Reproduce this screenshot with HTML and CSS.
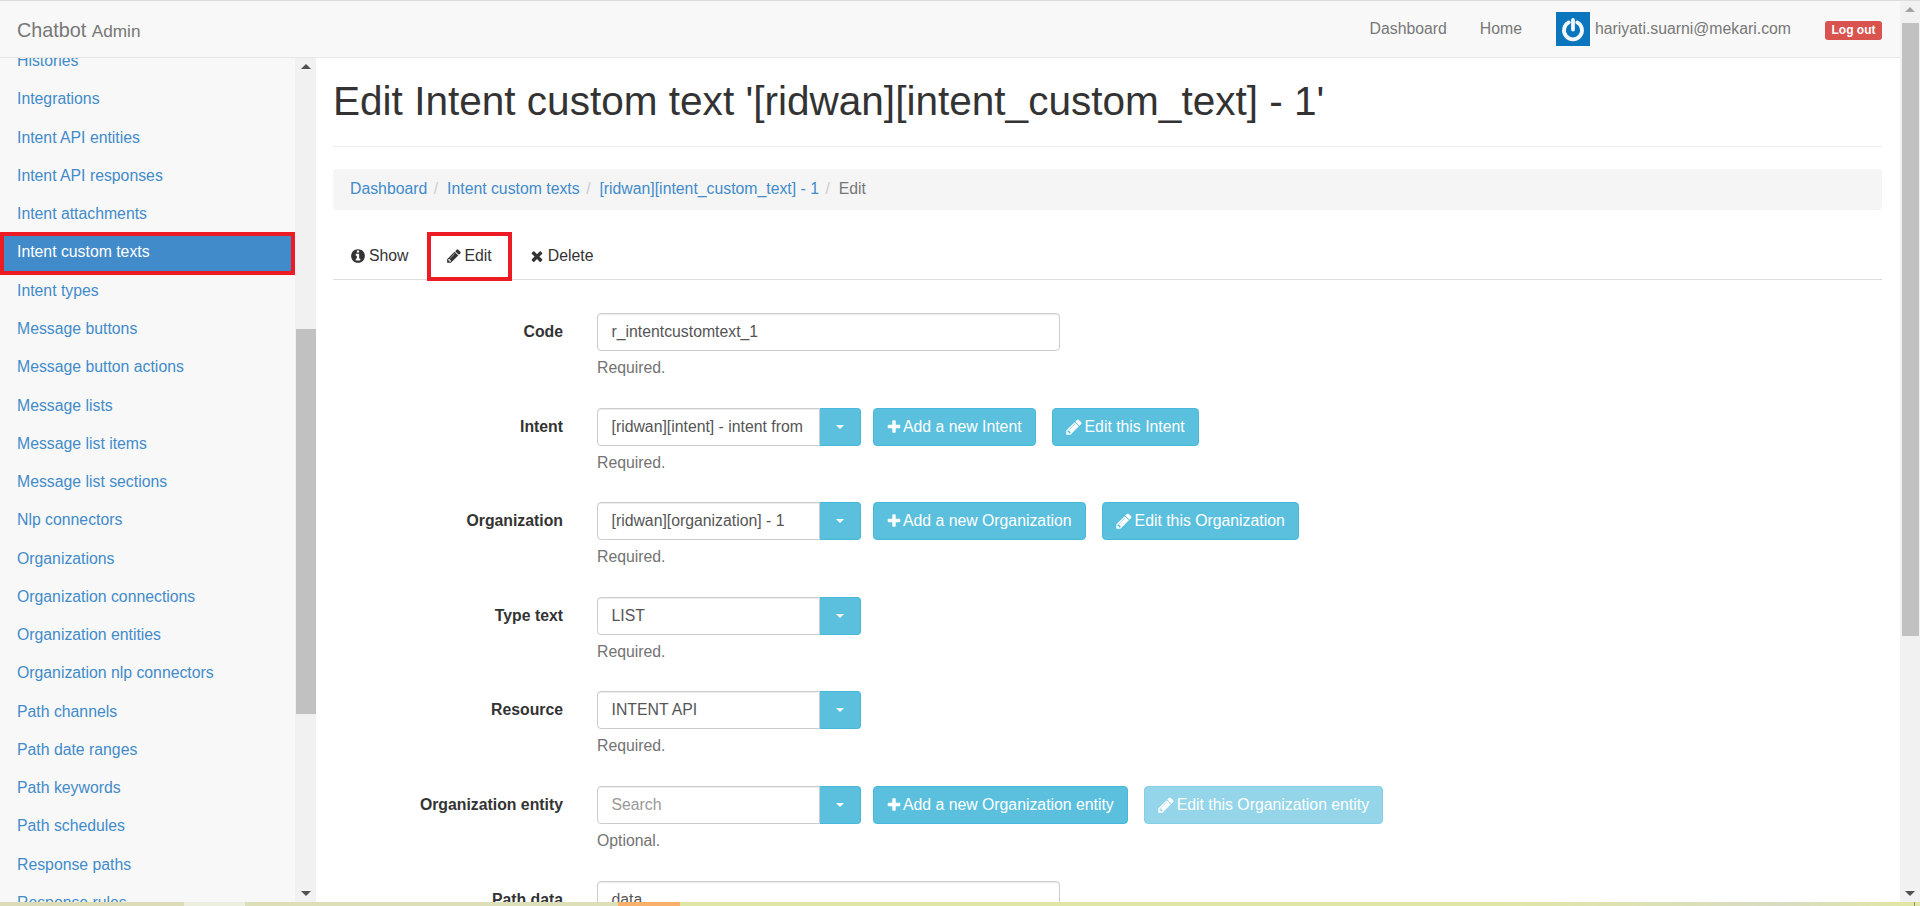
FILE: index.html
```html
<!DOCTYPE html>
<html lang="en">
<head>
<meta charset="utf-8">
<title>Edit Intent custom text</title>
<link rel="stylesheet" href="styles.css">
</head>
<body>
<svg class="defs" width="0" height="0" aria-hidden="true">
  <symbol id="i-info" viewBox="0 0 1536 1792"><path transform="translate(-128 0)" d="M1152 1376v-160q0-14-9-23t-23-9h-96v-512q0-14-9-23t-23-9h-320q-14 0-23 9t-9 23v160q0 14 9 23t23 9h96v320h-96q-14 0-23 9t-9 23v160q0 14 9 23t23 9h448q14 0 23-9t9-23zm-128-896v-160q0-14-9-23t-23-9h-192q-14 0-23 9t-9 23v160q0 14 9 23t23 9h192q14 0 23-9t9-23zm640 416q0 209-103 385.5t-279.5 279.5-385.5 103-385.5-103-279.5-279.5-103-385.5 103-385.5 279.5-279.5 385.5-103 385.5 103 279.5 279.5 103 385.5z"/></symbol>
  <symbol id="i-pencil" viewBox="0 0 1536 1792"><path transform="translate(-128 0)" d="M491 1536l91-91-235-235-91 91v107h128v128h107zm523-928q0-22-22-22-10 0-17 7l-542 542q-7 7-7 17 0 22 22 22 10 0 17-7l542-542q7-7 7-17zm-54-192l416 416-832 832h-416v-416zm683 96q0 53-37 90l-166 166-416-416 166-165q36-38 90-38 53 0 91 38l235 234q37 39 37 91z"/></symbol>
  <symbol id="i-times" viewBox="0 0 1408 1792"><path transform="translate(-192 0)" d="M1490 1322q0 40-28 68l-136 136q-28 28-68 28t-68-28l-294-294-294 294q-28 28-68 28t-68-28l-136-136q-28-28-28-68t28-68l294-294-294-294q-28-28-28-68t28-68l136-136q28-28 68-28t68 28l294 294 294-294q28-28 68-28t68 28l136 136q28 28 28 68t-28 68l-294 294 294 294q28 28 28 68z"/></symbol>
  <symbol id="i-plus" viewBox="0 0 1408 1792"><path transform="translate(-192 0)" d="M1600 736v192q0 40-28 68t-68 28h-416v416q0 40-28 68t-68 28h-192q-40 0-68-28t-28-68v-416h-416q-40 0-68-28t-28-68v-192q0-40 28-68t68-28h416v-416q0-40 28-68t68-28h192q40 0 68 28t28 68v416h416q40 0 68 28t28 68z"/></symbol>
</svg>

<div class="frame">
  <div class="page">
    <header class="navbar">
      <a class="brand" href="#">Chatbot <small>Admin</small></a>
      <nav class="topnav">
        <a href="#">Dashboard</a>
        <a href="#">Home</a>
        <span class="user">
          <svg class="avatar" viewBox="0 0 34 34" aria-hidden="true">
            <rect width="34" height="34" fill="#0b76bd"/>
            <path d="M12.8 10.4A9 9 0 1 0 21.2 10.4" fill="none" stroke="#f2f8fc" stroke-width="3.8" stroke-linecap="round"/>
            <path d="M17 8V17.5" fill="none" stroke="#f2f8fc" stroke-width="3.8" stroke-linecap="round"/>
          </svg>
          hariyati.suarni@mekari.com
        </span>
        <a class="logout" href="#">Log out</a>
      </nav>
    </header>

    <div class="layout">
      <aside class="sidebar">
        <ul class="menu">
          <li><a href="#">Histories</a></li>
          <li><a href="#">Integrations</a></li>
          <li><a href="#">Intent API entities</a></li>
          <li><a href="#">Intent API responses</a></li>
          <li><a href="#">Intent attachments</a></li>
          <li class="active"><a href="#">Intent custom texts</a></li>
          <li><a href="#">Intent types</a></li>
          <li><a href="#">Message buttons</a></li>
          <li><a href="#">Message button actions</a></li>
          <li><a href="#">Message lists</a></li>
          <li><a href="#">Message list items</a></li>
          <li><a href="#">Message list sections</a></li>
          <li><a href="#">Nlp connectors</a></li>
          <li><a href="#">Organizations</a></li>
          <li><a href="#">Organization connections</a></li>
          <li><a href="#">Organization entities</a></li>
          <li><a href="#">Organization nlp connectors</a></li>
          <li><a href="#">Path channels</a></li>
          <li><a href="#">Path date ranges</a></li>
          <li><a href="#">Path keywords</a></li>
          <li><a href="#">Path schedules</a></li>
          <li><a href="#">Response paths</a></li>
          <li><a href="#">Response rules</a></li>
        </ul>
        <div class="scrollbar side-bar">
          <span class="arrow up"></span>
          <span class="track"><span class="thumb"></span></span>
          <span class="arrow down"></span>
        </div>
      </aside>

      <main class="content">
        <h1 class="title">Edit Intent custom text '[ridwan][intent_custom_text] - 1'</h1>
        <ol class="crumbs">
          <li><a href="#">Dashboard</a></li>
          <li><a href="#">Intent custom texts</a></li>
          <li><a href="#">[ridwan][intent_custom_text] - 1</a></li>
          <li class="current">Edit</li>
        </ol>
        <ul class="tabs">
          <li><a href="#"><svg class="ico"><use href="#i-info"/></svg>Show</a></li>
          <li class="marked"><a href="#"><svg class="ico"><use href="#i-pencil"/></svg>Edit</a></li>
          <li><a href="#"><svg class="ico"><use href="#i-times"/></svg>Delete</a></li>
        </ul>

        <form class="form">
          <div class="row">
            <label class="label">Code</label>
            <div class="field">
              <div class="input wide">r_intentcustomtext_1</div>
              <p class="help">Required.</p>
            </div>
          </div>
          <div class="row">
            <label class="label">Intent</label>
            <div class="field">
              <div class="controls">
                <div class="combo"><div class="input">[ridwan][intent] - intent from</div><span class="caret-btn"><i class="caret"></i></span></div>
                <a class="btn" href="#"><svg class="ico"><use href="#i-plus"/></svg>Add a new Intent</a>
                <a class="btn" href="#"><svg class="ico pen"><use href="#i-pencil"/></svg>Edit this Intent</a>
              </div>
              <p class="help">Required.</p>
            </div>
          </div>
          <div class="row">
            <label class="label">Organization</label>
            <div class="field">
              <div class="controls">
                <div class="combo"><div class="input">[ridwan][organization] - 1</div><span class="caret-btn"><i class="caret"></i></span></div>
                <a class="btn" href="#"><svg class="ico"><use href="#i-plus"/></svg>Add a new Organization</a>
                <a class="btn" href="#"><svg class="ico pen"><use href="#i-pencil"/></svg>Edit this Organization</a>
              </div>
              <p class="help">Required.</p>
            </div>
          </div>
          <div class="row">
            <label class="label">Type text</label>
            <div class="field">
              <div class="controls">
                <div class="combo"><div class="input">LIST</div><span class="caret-btn"><i class="caret"></i></span></div>
              </div>
              <p class="help">Required.</p>
            </div>
          </div>
          <div class="row">
            <label class="label">Resource</label>
            <div class="field">
              <div class="controls">
                <div class="combo"><div class="input">INTENT API</div><span class="caret-btn"><i class="caret"></i></span></div>
              </div>
              <p class="help">Required.</p>
            </div>
          </div>
          <div class="row">
            <label class="label">Organization entity</label>
            <div class="field">
              <div class="controls">
                <div class="combo"><div class="input placeholder">Search</div><span class="caret-btn"><i class="caret"></i></span></div>
                <a class="btn" href="#"><svg class="ico"><use href="#i-plus"/></svg>Add a new Organization entity</a>
                <a class="btn disabled" href="#"><svg class="ico pen"><use href="#i-pencil"/></svg>Edit this Organization entity</a>
              </div>
              <p class="help">Optional.</p>
            </div>
          </div>
          <div class="row">
            <label class="label">Path data</label>
            <div class="field">
              <div class="input wide">data</div>
            </div>
          </div>
        </form>
      </main>
    </div>
  </div>

  <div class="scrollbar page-bar">
    <span class="arrow up"></span>
    <span class="track"><span class="thumb"></span></span>
    <span class="arrow down"></span>
  </div>
</div>
<div class="strip"></div>
</body>
</html>
```

FILE: styles.css
```css
* { box-sizing: border-box; }

html, body { height: 100%; }

body {
  margin: 0;
  height: 906px;
  overflow: hidden;
  display: flex;
  flex-direction: column;
  border-top: 1px solid #dcdcdc;
  background: #fff;
  color: #333;
  font-family: "Liberation Sans", Arial, sans-serif;
  font-size: 15.8px;
  line-height: 22px;
}

a { color: inherit; text-decoration: none; }
ul, ol { list-style: none; margin: 0; padding: 0; }
.defs { position: absolute; }

.frame { flex: 1; min-height: 0; display: flex; }
.page { flex: 1; min-width: 0; display: flex; flex-direction: column; }

/* Top navbar */
.navbar {
  flex: none;
  height: 57px;
  display: flex;
  align-items: center;
  justify-content: space-between;
  padding: 0 18px 0 17px;
  background: #f8f8f8;
  border-bottom: 1px solid #e7e7e7;
}
.brand { font-size: 19.8px; color: #777; padding-top: 2px; }
.brand small { font-size: 17.2px; }
.topnav { display: flex; align-items: center; color: #777; }
.topnav > a:nth-child(1) { margin-right: 33px; }
.topnav > a:nth-child(2) { margin-right: 34px; }
.user { display: flex; align-items: center; gap: 5px; margin-right: 34px; }
.avatar { width: 34px; height: 34px; display: block; }
.logout {
  padding: 0 6.5px;
  height: 19px;
  line-height: 19px;
  margin-top: 3px;
  border-radius: 3px;
  background: #d9534f;
  color: #fff;
  font-size: 12px;
  font-weight: 700;
}

/* Body layout */
.layout { flex: 1; min-height: 0; display: flex; }

.sidebar {
  flex: none;
  width: 316px;
  display: flex;
  overflow: hidden;
  background: #f8f8f8;
}
.menu { flex: 1; min-width: 0; margin-top: -15.9px; }
.menu li { height: 38.27px; position: relative; }
.menu a {
  display: block;
  height: 100%;
  padding-left: 17px;
  line-height: 38.27px;
  color: #428bca;
}
.menu .active a { background: #428bca; color: #fff; }
.menu .active::after {
  content: "";
  position: absolute;
  inset: -1px 0 -3px 0;
  border: 4px solid #ed1c24;
  pointer-events: none;
}

/* Scrollbars */
.scrollbar {
  flex: none;
  display: flex;
  flex-direction: column;
  align-items: center;
  background: #f1f1f1;
}
.side-bar { width: 21px; }
.page-bar { width: 20px; }
.track { flex: 1; width: 100%; display: block; }
.thumb { display: block; background: #c1c1c1; }
.side-bar .thumb { height: 385px; margin: 254px 0 0 1px; }
.page-bar .thumb { height: 613px; margin: 5px 1px 0 2px; }
.arrow { flex: none; width: 100%; height: 17px; position: relative; }
.arrow::before {
  content: "";
  position: absolute;
  left: 50%;
  top: 6px;
  margin-left: -5px;
  border-left: 5px solid transparent;
  border-right: 5px solid transparent;
}
.arrow.up::before { border-bottom: 5px solid #505050; }
.arrow.down::before { border-top: 5px solid #505050; }
.page-bar .arrow.up::before { border-bottom-color: #a3a3a3; }

/* Main */
.content {
  flex: 1;
  min-width: 0;
  overflow: hidden;
  padding: 0 18px 0 17px;
}
.title {
  margin: 0;
  height: 89px;
  padding-top: 22px;
  border-bottom: 1px solid #eee;
  font-size: 40.55px;
  font-weight: 400;
  line-height: 43px;
  color: #333;
}
.crumbs {
  display: flex;
  align-items: center;
  height: 41px;
  margin-top: 22px;
  padding: 0 0 2px 17px;
  border-radius: 4px;
  background: #f5f5f5;
  color: #777;
}
.crumbs a { color: #428bca; }
.crumbs li + li::before { content: "/"; color: #ccc; padding: 0 8.9px 0 6.5px; }

.tabs {
  display: flex;
  height: 48px;
  margin-top: 22px;
  border-bottom: 1px solid #ddd;
}
.tabs a {
  display: flex;
  align-items: center;
  height: 100%;
  padding: 0 18px;
  color: #333;
}
.tabs .marked { height: 49px; }
.tabs .marked a { padding: 0 16px 1px; border: 4px solid #ed1c24; }
.ico { width: 14px; height: 16px; margin-right: 4px; fill: currentColor; flex: none; }

/* Form */
.form { padding-top: 33px; }
.row { display: flex; height: 94.6px; }
.label {
  flex: none;
  width: 230px;
  text-align: right;
  font-weight: 700;
  line-height: 37px;
}
.field { margin-left: 34px; min-width: 0; }
.controls { display: flex; align-items: flex-start; }
.combo { display: flex; width: 264px; margin-right: 12px; }
.combo .input { flex: 1; min-width: 0; border-radius: 4px 0 0 4px; }
.input {
  height: 38px;
  padding: 0 13.5px;
  line-height: 35px;
  color: #555;
  background: #fff;
  border: 1px solid #ccc;
  border-radius: 4px;
  box-shadow: inset 0 1px 1px rgba(0, 0, 0, .075);
  white-space: nowrap;
  overflow: hidden;
}
.wide { width: 463px; }
.placeholder { color: #999; }
.caret-btn {
  flex: none;
  width: 41px;
  display: flex;
  align-items: center;
  justify-content: center;
  background: #5bc0de;
  border: 1px solid #46b8da;
  border-left: 0;
  border-radius: 0 4px 4px 0;
}
.caret {
  border-top: 4.4px solid #fff;
  border-left: 4.4px solid transparent;
  border-right: 4.4px solid transparent;
}
.btn {
  display: flex;
  align-items: center;
  height: 38px;
  margin-right: 16px;
  padding: 0 13px;
  background: #5bc0de;
  border: 1px solid #46b8da;
  border-radius: 4px;
  color: #fff;
  white-space: nowrap;
}
.btn .ico { margin-right: 2px; }
.btn .ico.pen { width: 16px; height: 18px; margin-right: 3px; }
.btn.disabled { opacity: .65; }
.help { margin: 6px 0 0; color: #737373; }

/* Bottom strip of the captured window */
.strip {
  flex: none;
  height: 4px;
  background:
    linear-gradient(#8f9070, #8f9070) 1914px 0 / 1px 100% no-repeat,
    linear-gradient(90deg,
      #dcdcb8 0 184px, #edefde 184px 245px, #dcdfb8 245px 618px,
      #f8b06a 618px 680px, #e0e6a6 680px 1500px, #d9dcc2 1780px, #e0e6a6 1900px);
}
```
